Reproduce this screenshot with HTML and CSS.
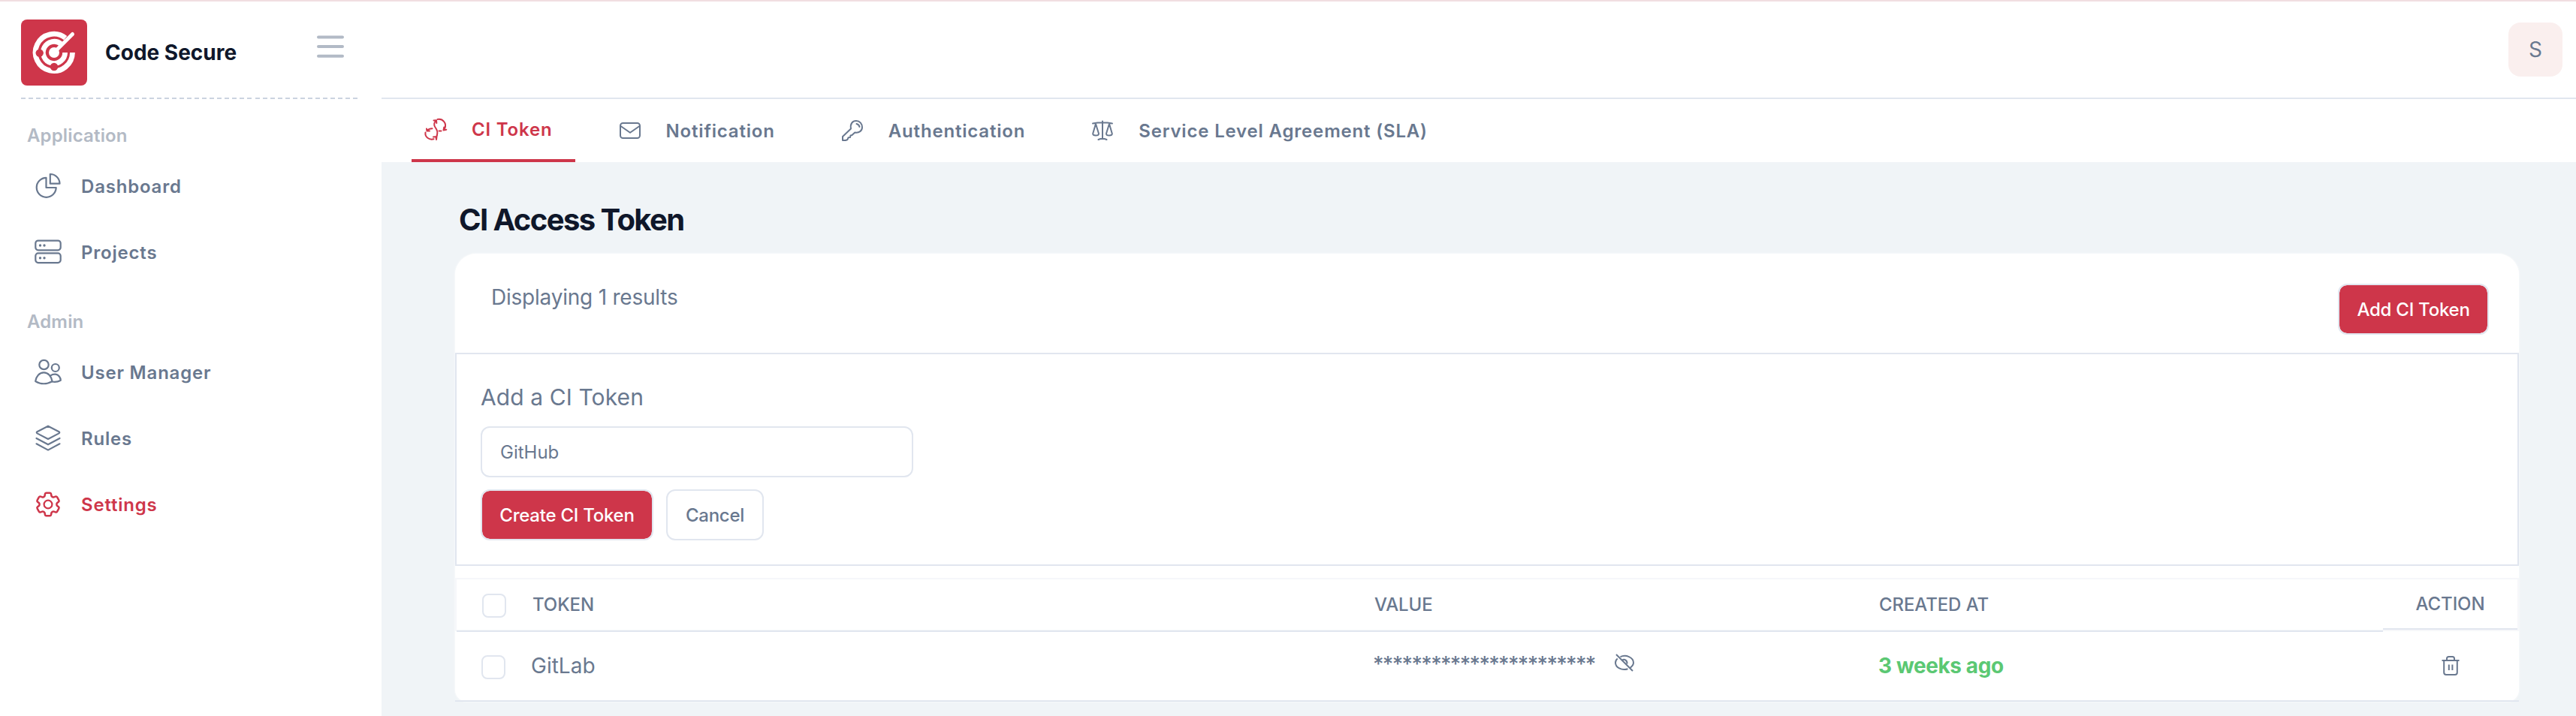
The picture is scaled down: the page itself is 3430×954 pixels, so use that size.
FILE: index.html
```html
<!DOCTYPE html>
<html lang="en">
<head>
<meta charset="utf-8">
<title>Code Secure</title>
<link rel="stylesheet" href="styles.css">
</head>
<body>
<div class="app">
  <aside class="sidebar">
    <div class="brand">
      <svg class="brand-logo" viewBox="0 0 88 88" fill="none">
        <rect width="88" height="88" rx="8" fill="#ce364a"/>
        <g stroke="#fff">
          <path d="M59.2 24.6A24.7 24.7 0 1 0 68.5 44" stroke-width="6.8"/>
          <path d="M53.6 32.9A14.6 14.6 0 1 0 58.6 44" stroke-width="6.8"/>
          <path d="M47 41L68.5 19.5" stroke-width="5" stroke-linecap="round"/>
        </g>
        <circle cx="44" cy="44" r="7" fill="#fff"/>
        <circle cx="24.7" cy="44.6" r="5.2" fill="#ce364a"/>
        <circle cx="44" cy="63" r="5.2" fill="#ce364a"/>
      </svg>
      <span class="brand-name">Code Secure</span>
      <svg class="menu-icon" viewBox="0 0 36 30" stroke="#b2bac6" stroke-width="4" stroke-linecap="round"><path d="M2 2.500H34M2 15H34M2 27.700H34"/></svg>
    </div>
    <div class="nav-title">Application</div>
    <nav class="nav">
      <a class="nav-item"><svg class="nav-icon" viewBox="0 0 36 36"><path d="M15.500 6.800A13 13 0 1 0 28.700 20H15.500Z"/><path d="M20.800 2V14.700H33.500A12.700 12.700 0 0 0 20.800 2Z"/></svg>Dashboard</a>
      <a class="nav-item"><svg class="nav-icon" viewBox="0 0 36 36"><rect x="1.300" y="2.600" width="33.400" height="12.700" rx="3.500"/><rect x="1.300" y="19.400" width="33.400" height="12.700" rx="3.500"/><path d="M7.500 9h.01M13 9h.01M7.500 25.800h.01M13 25.800h.01" stroke-width="3.400"/></svg>Projects</a>
    </nav>
    <div class="nav-title nav-title-admin">Admin</div>
    <nav class="nav">
      <a class="nav-item"><svg class="nav-icon" viewBox="0 0 36 36"><circle cx="12.500" cy="8" r="6.200"/><circle cx="27.800" cy="12" r="5"/><path d="M1.200 30C2 23.500 6.500 18.300 12.300 18.300S22.500 23.500 23.500 30C16.500 34.300 8 34.300 1.200 30Z"/><path d="M21.500 22.300C23.500 20.800 25.500 20.500 28 20.700C32 21.200 34.700 25 34.800 28.800C31.500 30.700 27 31.200 23.200 30.500"/></svg>User Manager</a>
      <a class="nav-item"><svg class="nav-icon" viewBox="0 0 36 36"><path d="M18 1.700L32.500 9.200Q34 10.300 32.500 11.400L18 19L3.500 11.400Q2 10.300 3.500 9.200Z"/><path d="M2.500 18L18 26.300L33.500 18M2.500 25.300L18 33.600L33.500 25.300"/></svg>Rules</a>
      <a class="nav-item active"><svg class="nav-icon" viewBox="0 0 24 24"><path class="thin" d="M9.594 3.940c.09-.542.56-.940 1.110-.940h2.593c.55 0 1.020.398 1.110.940l.213 1.281c.063.374.313.686.645.870.074.040.147.083.220.127.325.196.720.257 1.075.124l1.217-.456a1.125 1.125 0 0 1 1.370.490l1.296 2.247a1.125 1.125 0 0 1-.26 1.431l-1.003.827c-.293.241-.438.613-.430.992a7.723 7.723 0 0 1 0 .255c-.008.378.137.750.430.991l1.004.827c.424.350.534.955.260 1.430l-1.298 2.247a1.125 1.125 0 0 1-1.369.491l-1.217-.456c-.355-.133-.750-.072-1.076.124a6.470 6.470 0 0 1-.220.128c-.331.183-.581.495-.644.869l-.213 1.281c-.09.543-.560.940-1.110.940h-2.594c-.55 0-1.019-.398-1.110-.940l-.213-1.281c-.062-.374-.312-.686-.644-.870a6.520 6.520 0 0 1-.220-.127c-.325-.196-.720-.257-1.076-.124l-1.217.456a1.125 1.125 0 0 1-1.369-.490l-1.297-2.247a1.125 1.125 0 0 1 .260-1.431l1.004-.827c.292-.240.437-.613.430-.991a6.932 6.932 0 0 1 0-.255c.007-.380-.138-.751-.430-.992l-1.004-.827a1.125 1.125 0 0 1-.260-1.430l1.297-2.247a1.125 1.125 0 0 1 1.370-.491l1.216.456c.356.133.751.072 1.076-.124.072-.044.146-.086.220-.128.332-.183.582-.495.644-.869l.214-1.280Z" transform="matrix(1.13 0 0 1.13 -1.56 -1.56)"/><circle class="thin" cx="12" cy="12" r="3.6"/></svg>Settings</a>
    </nav>
  </aside>
  <div class="main">
    <header class="topbar"><div class="avatar">S</div></header>
    <div class="tabs">
      <a class="tab active"><svg class="tab-icon" viewBox="0 0 32 32"><path d="M18.500 2.900C25.500 1.500 31 8 28.300 15M27.300 13.500L26.500 17.500L30.300 16.800M13.500 4.500L17 4.200L17.300 8M16 5C12.500 9.500 14.500 12.500 17 16C19.200 19.500 18.500 24 16.500 28M13 26.500L17.500 26L17 30M13.500 29.300C7.500 31 1.500 26.500 2.500 20.500M4 15.500L4.500 18.500H8M4.800 18C6.500 16 8.500 15.300 11.500 15.300M20.500 18.500H23.500"/></svg>CI Token</a>
      <a class="tab"><svg class="tab-icon" viewBox="0 0 32 32"><rect x="3" y="6" width="26" height="20" rx="3.500"/><path d="M3.500 10L16 18.700L28.500 10"/></svg>Notification</a>
      <a class="tab"><svg class="tab-icon" viewBox="0 0 32 32"><path d="M14 13.500C12.800 7 16 3 21 3C26 3 29 7 29 11.500C29 16.500 25 19.300 19.300 18.500L15.500 22L13.500 22.500L13 25L10.500 25.300L9.500 28L7 29H3V24ZM21.500 7Q25 8 25.500 11"/></svg>Authentication</a>
      <a class="tab"><svg class="tab-icon" viewBox="0 0 32 32"><path d="M16 3.500V27M3 6.500Q16 4 29 6.500M10.500 28Q16 25.500 21.500 28M7 7L3.200 20Q3 22.500 7 22.500T11 20ZM25 7L21 20Q21 22.500 25 22.500T28.800 20Z"/></svg>Service Level Agreement (SLA)</a>
    </div>
    <main class="content">
      <h1 class="page-title">CI Access Token</h1>
      <section class="card">
        <div class="card-head"><span class="count">Displaying 1 results</span><button class="btn primary add">Add CI Token</button></div>
        <div class="form">
          <h2 class="form-title">Add a CI Token</h2>
          <div class="input">GitHub</div>
          <div class="form-actions"><button class="btn primary create">Create CI Token</button><button class="btn cancel">Cancel</button></div>
        </div>
        <div class="table">
          <div class="row head">
            <div class="cell check"><span class="checkbox"></span></div>
            <div class="cell">TOKEN</div><div class="cell">VALUE</div><div class="cell">CREATED AT</div><div class="cell action">ACTION</div>
          </div>
          <div class="row item">
            <div class="cell check"><span class="checkbox"></span></div>
            <div class="cell">GitLab</div>
            <div class="cell value"><span class="stars">***********************</span><svg class="eye-icon" viewBox="0 0 28 28"><path d="M8.500 6.200C16 2.500 26 7 26 14C26 17 24 19 21.500 21M18.500 22.300C10 25 2 20 2 14C2 11.500 3 9.800 4.800 8.500M3 3L25 25M11 10.500C14 8.500 18 11 17.500 15.500"/></svg></div>
            <div class="cell created">3 weeks ago</div>
            <div class="cell action"><svg class="trash-icon" viewBox="0 0 24 28"><path d="M0.500 7H23.500M3.200 7V23Q3.200 26 6.200 26H17.800Q20.800 26 20.800 23V7M7 7V4.500Q7 2 9.500 2H14.500Q17 2 17 4.500V7M9.800 12.500V20M14.400 12.500V20"/></svg></div>
          </div>
        </div>
      </section>
    </main>
  </div>
</div>
</body>
</html>
```

FILE: styles.css
```css
* { box-sizing: border-box; margin: 0; }
body { font-family: Inter, "Liberation Sans", sans-serif; color: #69788f; background: #fff; white-space: nowrap; }
svg { display: block; flex: none; }
.app { display: flex; width: 3430px; height: 954px; border-top: 2px solid #f1dee1; overflow: hidden; }

.sidebar { width: 508px; flex: none; padding: 0 32px 0 28px; background: repeating-linear-gradient(90deg, #cbd3e0 0 6px, transparent 6px 10.05px) 28px 128px / 448px 2px no-repeat #fff; }
.brand { display: flex; height: 128px; padding-top: 24px; }
.brand-logo { width: 88px; height: 88px; }
.brand-name { margin: 26px 0 0 24px; font-size: 28px; line-height: 36px; font-weight: 650; letter-spacing: 0; color: #0f172a; }
.menu-icon { width: 36px; height: 30px; margin: 21px 18px 0 auto; }
.nav-title { margin: 34px 0 0 8px; font-size: 24px; line-height: 34px; height: 40px; font-weight: 600; letter-spacing: .15px; color: #b3bac5; }
.nav-title-admin { margin-top: 32px; }
.nav-item { display: flex; align-items: center; height: 88px; padding-left: 18px; gap: 26px; font-size: 24px; font-weight: 600; letter-spacing: .8px; }
.nav-icon { width: 36px; height: 36px; fill: none; stroke: currentColor; stroke-width: 2.2; stroke-linecap: round; stroke-linejoin: round; }
.thin { stroke-width: 1.5; }
.active { color: #ce364a; }

.main { flex: 1; min-width: 0; display: flex; flex-direction: column; }
.topbar { height: 130px; border-bottom: 2px solid #e1e6ef; display: flex; justify-content: flex-end; padding: 28px 18px 0 0; }
.avatar { width: 72px; height: 72px; border-radius: 16px; background: #faefee; font-size: 28px; line-height: 72px; text-align: center; }
.tabs { display: flex; height: 84px; padding-left: 40px; }
.tab { display: flex; align-items: center; padding: 0 30px 0 16px; margin-right: 41px; gap: 32px; font-size: 24px; font-weight: 600; letter-spacing: .82px; }
.tab.active { border-bottom: 4px solid #ce364a; }
.tab-icon { width: 32px; height: 32px; fill: none; stroke: currentColor; stroke-width: 2; stroke-linecap: round; stroke-linejoin: round; }
.content { flex: 1; background: #f0f4f7; padding: 0 76px 0 98px; }
.page-title { font-size: 40px; line-height: 48px; font-weight: 650; letter-spacing: -1.6px; color: #0f172a; margin: 53px 0 21px 5px; }
.card { height: 597px; background: #fff; border-radius: 28px 28px 16px 16px; box-shadow: 0 0 3px #fff; }
.card-head { height: 132px; display: flex; justify-content: space-between; padding: 40px 40px 0 48px; }
.count { font-size: 28px; line-height: 36px; letter-spacing: -.22px; }
.btn { height: 68px; padding: 1px 0 0; border: 2px solid #e1e6ef; border-radius: 12px; background: #fff; color: inherit; font: 500 24px/63px Inter, sans-serif; letter-spacing: -.25px; text-align: center; }
.btn.primary { background: #ce364a; color: #fff; background-clip: padding-box; }
.add { width: 201px; }
.create { width: 230px; }
.cancel { width: 130px; }
.form { height: 284px; border: 2px solid #e1e6ef; padding: 38px 0 0 32px; }
.form-title { font-size: 30px; line-height: 38px; font-weight: 400; letter-spacing: .1px; margin-bottom: 20px; }
.input { width: 576px; height: 68px; border: 2px solid #e1e6ef; border-radius: 12px; padding-left: 24px; font-size: 24px; line-height: 66px; }
.form-actions { display: flex; gap: 17px; margin-top: 16px; }
.table { margin-top: 16px; }
.row { display: grid; grid-template-columns: 101px 1121px 673px 672px 1fr; }
.head { height: 71px; grid-template-columns: 101px 1121px 672px 671px 1fr; border: 2px solid #f6f7fa; border-bottom: 0; background: linear-gradient(#f6f7fa, #f6f7fa) bottom / 100% 2px no-repeat; font-size: 24px; font-weight: 500; line-height: 67px; letter-spacing: -.1px; }
.head .cell { border-bottom: 2px solid #e1e6ef; }
.head .action { margin-bottom: 3px; line-height: 65px; text-align: center; }
.item { height: 94px; border-bottom: 2px solid #e1e6ef; font-size: 28px; line-height: 92px; }
.checkbox { display: block; width: 32px; height: 32px; border: 2px solid #e1e6ef; border-radius: 8px; }
.created { color: #5bc873; font-weight: 650; letter-spacing: -.4px; }
.head .check { padding: 19px 0 0 34px; }
.item .check { padding: 32px 0 0 35px; }
.value { display: flex; }
.stars { line-height: 88px; letter-spacing: -1.72px; font-weight: 500; }
.eye-icon { width: 28px; height: 28px; margin: 28px 0 0 25px; fill: none; stroke: currentColor; stroke-width: 2; }
.trash-icon { width: 24px; height: 28px; margin: 32px 0 0 78px; fill: none; stroke: currentColor; stroke-width: 2; }
```
